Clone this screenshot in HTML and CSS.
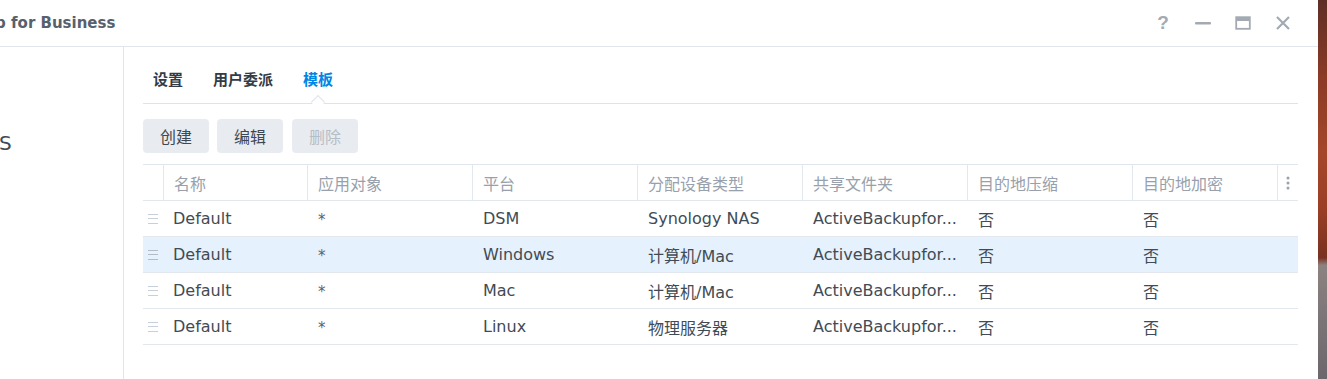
FILE: index.html
```html
<!DOCTYPE html>
<html lang="zh-CN">
<head>
    <meta charset="UTF-8">
    <title>Active Backup for Business</title>
    <link rel="stylesheet" href="styles.css">
</head>
<body>

<div class="window">
    <div class="titlebar">
        <div class="app-title">Active Backup for Business</div>
        <div class="win-tools">
            <span class="tool tool-help">?</span>
            <span class="tool">
                <svg width="18" height="18" viewBox="0 0 18 18"><rect x="1" y="8" width="16" height="2.4" rx="1" fill="#a3aab3"/></svg>
            </span>
            <span class="tool">
                <svg width="18" height="18" viewBox="0 0 18 18"><rect x="2.2" y="3.2" width="13.6" height="11.6" fill="none" stroke="#a3aab3" stroke-width="1.8"/><rect x="2" y="3" width="14" height="4" fill="#a3aab3"/></svg>
            </span>
            <span class="tool">
                <svg width="18" height="18" viewBox="0 0 18 18"><path d="M3 3 L15 15 M15 3 L3 15" stroke="#a3aab3" stroke-width="2.2"/></svg>
            </span>
        </div>
    </div>

    <div class="win-body">
        <div class="sidebar">
            <div class="side-item">ABS</div>
        </div>

        <div class="content">
            <div class="tabs">
                <div class="tab">设置</div>
                <div class="tab">用户委派</div>
                <div class="tab active">模板</div>
            </div>

            <div class="toolbar">
                <button class="btn">创建</button>
                <button class="btn">编辑</button>
                <button class="btn" disabled>删除</button>
            </div>

            <div class="grid">
                <div class="row head">
                    <div class="cell handle"></div>
                    <div class="cell">名称</div>
                    <div class="cell">应用对象</div>
                    <div class="cell">平台</div>
                    <div class="cell">分配设备类型</div>
                    <div class="cell">共享文件夹</div>
                    <div class="cell">目的地压缩</div>
                    <div class="cell">目的地加密</div>
                    <div class="cell more">
                        <svg width="4" height="14" viewBox="0 0 4 14"><circle cx="2" cy="2" r="1.5" fill="#9aa2ac"/><circle cx="2" cy="7" r="1.5" fill="#9aa2ac"/><circle cx="2" cy="12" r="1.5" fill="#9aa2ac"/></svg>
                    </div>
                </div>

                <div class="row">
                    <div class="cell handle"><span class="bars"></span></div>
                    <div class="cell">Default</div>
                    <div class="cell"><span class="star">*</span></div>
                    <div class="cell">DSM</div>
                    <div class="cell">Synology NAS</div>
                    <div class="cell">ActiveBackupfor...</div>
                    <div class="cell">否</div>
                    <div class="cell">否</div>
                    <div class="cell"></div>
                </div>

                <div class="row selected">
                    <div class="cell handle"><span class="bars"></span></div>
                    <div class="cell">Default</div>
                    <div class="cell"><span class="star">*</span></div>
                    <div class="cell">Windows</div>
                    <div class="cell">计算机/Mac</div>
                    <div class="cell">ActiveBackupfor...</div>
                    <div class="cell">否</div>
                    <div class="cell">否</div>
                    <div class="cell"></div>
                </div>

                <div class="row">
                    <div class="cell handle"><span class="bars"></span></div>
                    <div class="cell">Default</div>
                    <div class="cell"><span class="star">*</span></div>
                    <div class="cell">Mac</div>
                    <div class="cell">计算机/Mac</div>
                    <div class="cell">ActiveBackupfor...</div>
                    <div class="cell">否</div>
                    <div class="cell">否</div>
                    <div class="cell"></div>
                </div>

                <div class="row">
                    <div class="cell handle"><span class="bars"></span></div>
                    <div class="cell">Default</div>
                    <div class="cell"><span class="star">*</span></div>
                    <div class="cell">Linux</div>
                    <div class="cell">物理服务器</div>
                    <div class="cell">ActiveBackupfor...</div>
                    <div class="cell">否</div>
                    <div class="cell">否</div>
                    <div class="cell"></div>
                </div>
            </div>
        </div>
    </div>
</div>

<div class="desktop"></div>

</body>
</html>
```

FILE: styles.css
```css
html, body {
    margin: 0;
    height: 100%;
    overflow: hidden;
}
body {
    display: flex;
    font-family: "DejaVu Sans", "Noto Sans CJK SC", sans-serif;
    color: #414b55;
    background: #fff;
}

.window {
    width: 1318px;
    flex: none;
    display: flex;
    flex-direction: column;
    background: #fff;
    overflow: hidden;
}
.desktop {
    flex: 1;
    background: linear-gradient(to bottom,
        #5e2f27 0%, #8a3a26 20%, #a4472a 40%, #9a3f26 55%, #7a3121 68%,
        #8c8280 70%, #7b7477 85%, #6c676c 100%);
}

/* title bar */
.titlebar {
    height: 46px;
    border-bottom: 1px solid #e1e6ec;
    display: flex;
    align-items: center;
    flex: none;
}
.app-title {
    margin-left: -114px;
    font-size: 15px;
    font-weight: bold;
    color: #57616d;
    white-space: nowrap;
    flex: 1;
}
.win-tools {
    display: flex;
    gap: 22px;
    margin-right: 26px;
    align-items: center;
}
.tool {
    width: 18px;
    height: 18px;
    display: flex;
    align-items: center;
    justify-content: center;
    color: #a3aab3;
}
.tool-help {
    font-size: 19px;
    font-weight: bold;
    font-family: "Liberation Sans", sans-serif;
}

.win-body {
    flex: 1;
    display: flex;
}
.sidebar {
    width: 123px;
    border-right: 1px solid #e1e6ec;
    flex: none;
    overflow: hidden;
}
.side-item {
    margin-left: -28px;
    margin-top: 84px;
    font-size: 20px;
    color: #414b55;
}

.content {
    flex: 1;
    padding: 0 20px 0 19px;
}

/* tabs */
.tabs {
    display: flex;
    gap: 30px;
    padding: 23px 0 13px 10px;
    border-bottom: 1px solid #dde3ea;
}
.tab {
    font-size: 15px;
    line-height: 20px;
    font-weight: bold;
    color: #333c46;
    position: relative;
}
.tab.active {
    color: #0086e5;
}
.tab.active::after {
    content: "";
    position: absolute;
    left: 50%;
    bottom: -17px;
    width: 9px;
    height: 9px;
    margin-left: -5px;
    background: #fff;
    border-left: 1px solid #dde3ea;
    border-top: 1px solid #dde3ea;
    transform: rotate(45deg);
}

/* toolbar */
.toolbar {
    display: flex;
    gap: 8px;
    margin-top: 15px;
}
.btn {
    height: 34px;
    width: 66px;
    border: none;
    border-radius: 4px;
    background: #e8ecf1;
    color: #3f4852;
    font-family: inherit;
    font-size: 16px;
    padding: 0;
    cursor: pointer;
}
.btn + .btn + .btn {
    margin-left: 1px;
}
.btn:disabled {
    color: #b6bdc6;
    cursor: default;
}

/* grid */
.grid {
    margin-top: 11px;
    border-top: 1px solid #e1e6ec;
}
.row {
    display: grid;
    grid-template-columns: 20px 144px 165px 165px 165px 165px 165px 145px 21px;
    height: 36px;
    border-bottom: 1px solid #e3e8ee;
    box-sizing: border-box;
    font-size: 16px;
}
.row.head {
    color: #98a1ab;
}
.row.head .cell + .cell {
    border-left: 1px solid #e3e8ee;
}
.row.selected {
    background: #e5f1fc;
}
.cell {
    display: flex;
    align-items: center;
    padding-left: 10px;
    white-space: nowrap;
    overflow: hidden;
}
.row:not(.head) .cell:nth-child(n+3) {
    padding-left: 11px;
}
.cell.handle {
    padding-left: 5px;
}
.cell.more {
    padding-left: 8px;
}
.star {
    font-size: 15px;
    color: #5a636d;
    position: relative;
    top: 1px;
}
.bars {
    width: 10px;
    height: 8px;
    border-top: 1px solid #c7cfd8;
    border-bottom: 1px solid #c7cfd8;
    position: relative;
}
.bars::after {
    content: "";
    position: absolute;
    left: 0;
    right: 0;
    top: 3px;
    border-top: 1px solid #c7cfd8;
}
.row.selected .bars,
.row.selected .bars::after {
    border-color: #b3bcc6;
}
```
